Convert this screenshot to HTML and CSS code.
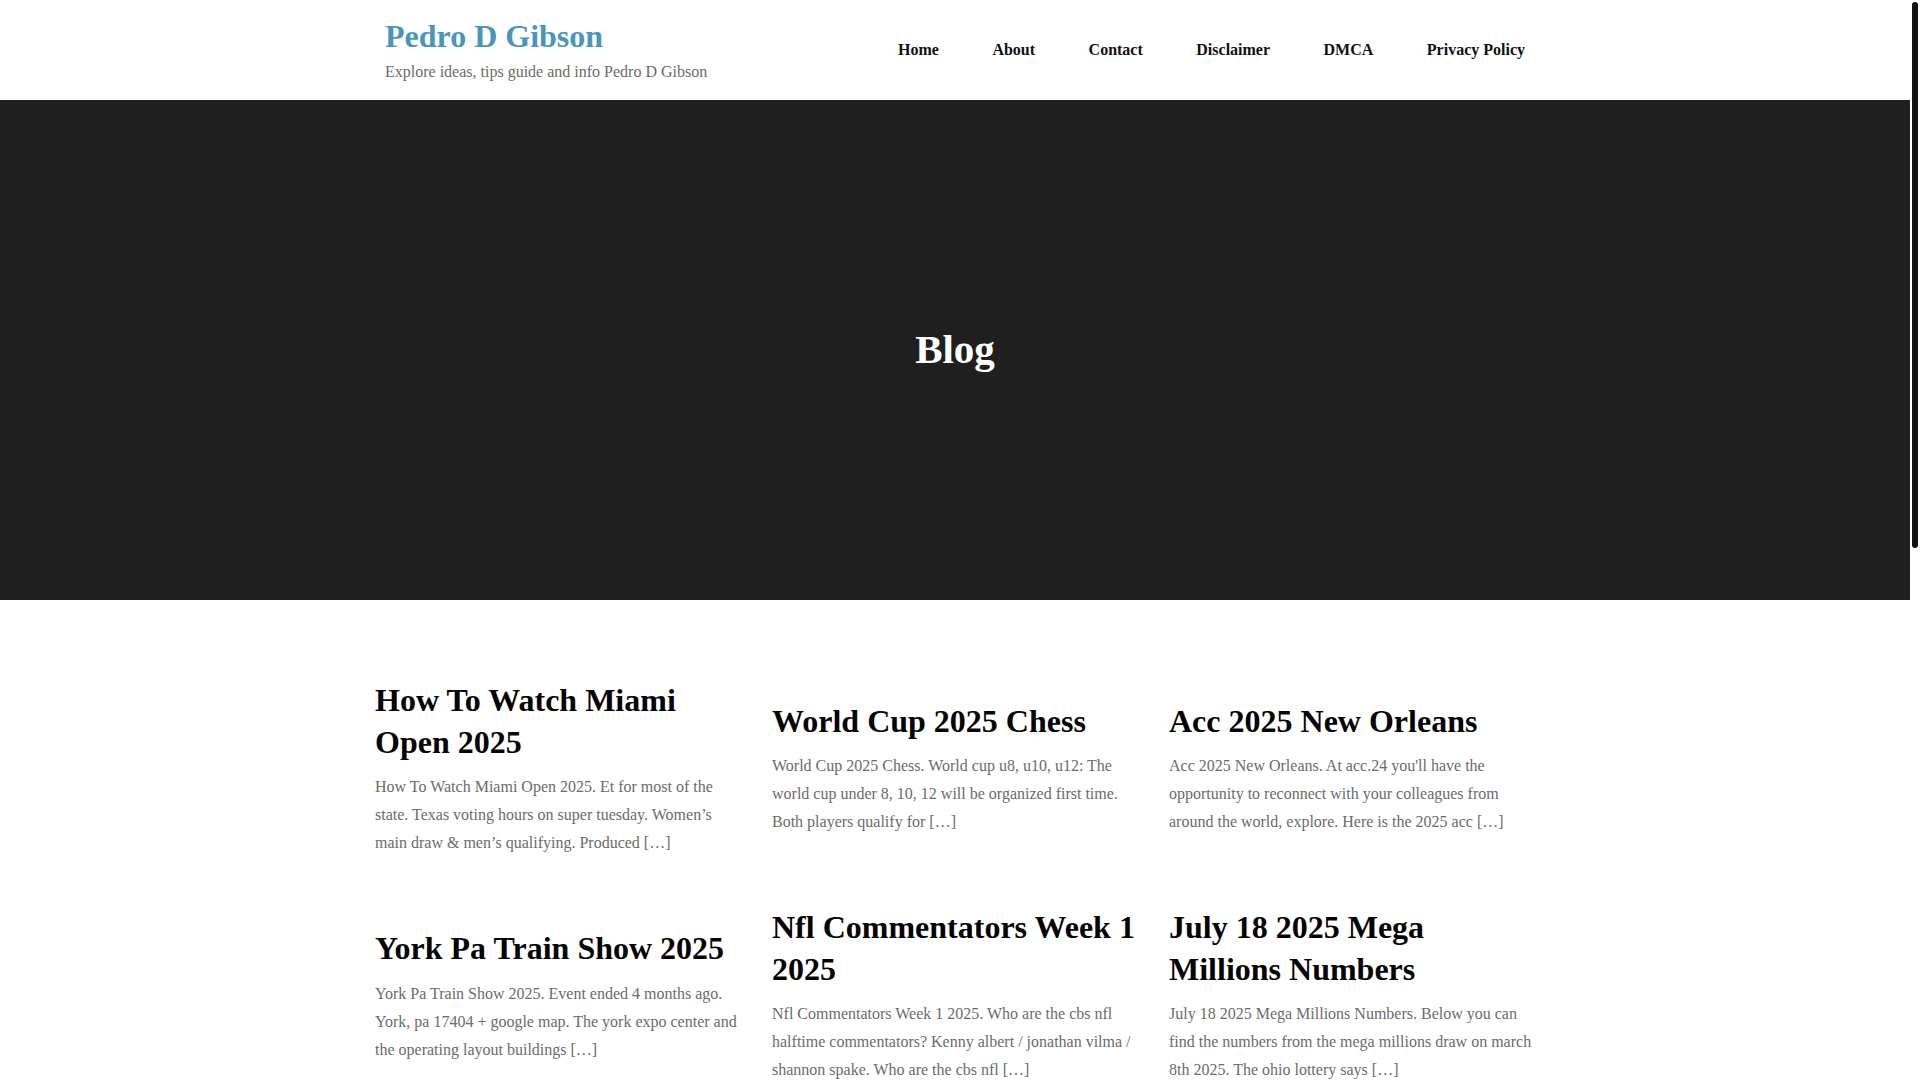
FILE: index.html
```html
<!DOCTYPE html>
<html lang="en">
<head>
<meta charset="utf-8">
<title>Blog - Pedro D Gibson</title>
<link rel="stylesheet" href="styles.css">
</head>
<body>
<div class="page">
<header class="site-header">
  <div class="header-inner">
    <div class="brand">
      <a class="site-title" href="#">Pedro D Gibson</a>
      <p class="site-tagline">Explore ideas, tips guide and info Pedro D Gibson</p>
    </div>
    <nav class="main-nav">
      <a href="#">Home</a>
      <a href="#">About</a>
      <a href="#">Contact</a>
      <a href="#">Disclaimer</a>
      <a href="#">DMCA</a>
      <a href="#">Privacy Policy</a>
    </nav>
  </div>
</header>

<section class="hero">
  <h1 class="hero-title">Blog</h1>
</section>

<main class="posts">
  <div class="post-grid">
    <article class="post">
      <h2 class="post-title">How To Watch Miami Open 2025</h2>
      <p class="post-excerpt">How To Watch Miami Open 2025. Et for most of the state. Texas voting hours on super tuesday. Women’s main draw &amp; men’s qualifying. Produced […]</p>
    </article>
    <article class="post">
      <h2 class="post-title">World Cup 2025 Chess</h2>
      <p class="post-excerpt">World Cup 2025 Chess. World cup u8, u10, u12: The world cup under 8, 10, 12 will be organized first time. Both players qualify for […]</p>
    </article>
    <article class="post">
      <h2 class="post-title">Acc 2025 New Orleans</h2>
      <p class="post-excerpt">Acc 2025 New Orleans. At acc.24 you'll have the opportunity to reconnect with your colleagues from around the world, explore. Here is the 2025 acc […]</p>
    </article>
    <article class="post">
      <h2 class="post-title">York Pa Train Show 2025</h2>
      <p class="post-excerpt">York Pa Train Show 2025. Event ended 4 months ago. York, pa 17404 + google map. The york expo center and the operating layout buildings […]</p>
    </article>
    <article class="post">
      <h2 class="post-title">Nfl Commentators Week 1 2025</h2>
      <p class="post-excerpt">Nfl Commentators Week 1 2025. Who are the cbs nfl halftime commentators? Kenny albert / jonathan vilma / shannon spake. Who are the cbs nfl […]</p>
    </article>
    <article class="post">
      <h2 class="post-title">July 18 2025 Mega Millions Numbers</h2>
      <p class="post-excerpt">July 18 2025 Mega Millions Numbers. Below you can find the numbers from the mega millions draw on march 8th 2025. The ohio lottery says […]</p>
    </article>
  </div>
</main>

<footer class="site-footer">
  <p>Copyright © 2025 Pedro D Gibson</p>
</footer>
</div>
<div class="scrollbar" aria-hidden="true"><div class="scrollbar-thumb"></div></div>
</body>
</html>
```

FILE: styles.css
```css
body {
  margin: 0;
  font-family: "Liberation Serif", "Times New Roman", serif;
  color: #111;
  background: #fff;
}

.page {
  margin-right: 10px;
  background: #fff;
}

.scrollbar {
  position: fixed;
  top: 0;
  right: 0;
  bottom: 0;
  width: 10px;
  background: #fff;
}

.scrollbar-thumb {
  position: absolute;
  top: 2px;
  left: 2px;
  width: 6px;
  height: 546px;
  border-radius: 3px;
  background: #111;
}

a {
  text-decoration: none;
}

.site-header {
  height: 100px;
  background: #fff;
}

.header-inner {
  width: 1140px;
  height: 100%;
  margin: 0 auto;
  display: flex;
  align-items: center;
  justify-content: space-between;
}

.brand {
  display: flex;
  flex-direction: column;
}

.site-title {
  font-size: 32px;
  line-height: 41.6px;
  font-weight: bold;
  color: #4a96bb;
}

.site-tagline {
  margin: 3px 0 0;
  font-size: 16px;
  line-height: 24px;
  color: #6b6b6b;
}

.main-nav {
  display: flex;
  gap: 53.5px;
  align-items: center;
}

.main-nav a {
  font-size: 16px;
  line-height: 24px;
  font-weight: bold;
  color: #111;
}

.hero {
  height: 500px;
  background: #1f1f1f;
  display: flex;
  align-items: center;
  justify-content: center;
}

.hero-title {
  margin: 0;
  font-size: 41px;
  line-height: 1.2;
  font-weight: bold;
  color: #fff;
}

.posts {
  padding: 80px 0 80px;
}

.post-grid {
  width: 1160px;
  margin: 0 auto;
  display: grid;
  grid-template-columns: repeat(3, 1fr);
  column-gap: 31px;
  row-gap: 50px;
  align-items: center;
}

.post-title {
  margin: 0;
  font-size: 32px;
  line-height: 41.6px;
  font-weight: bold;
  color: #050505;
}

.post-excerpt {
  margin: 10px 0 0;
  font-size: 16px;
  line-height: 28px;
  color: #6b6b6b;
}

.site-footer {
  height: 60px;
  background: #1f1f1f;
  display: flex;
  align-items: center;
  justify-content: center;
}

.site-footer p {
  margin: 0;
  font-size: 14px;
  color: #bbb;
}
```
